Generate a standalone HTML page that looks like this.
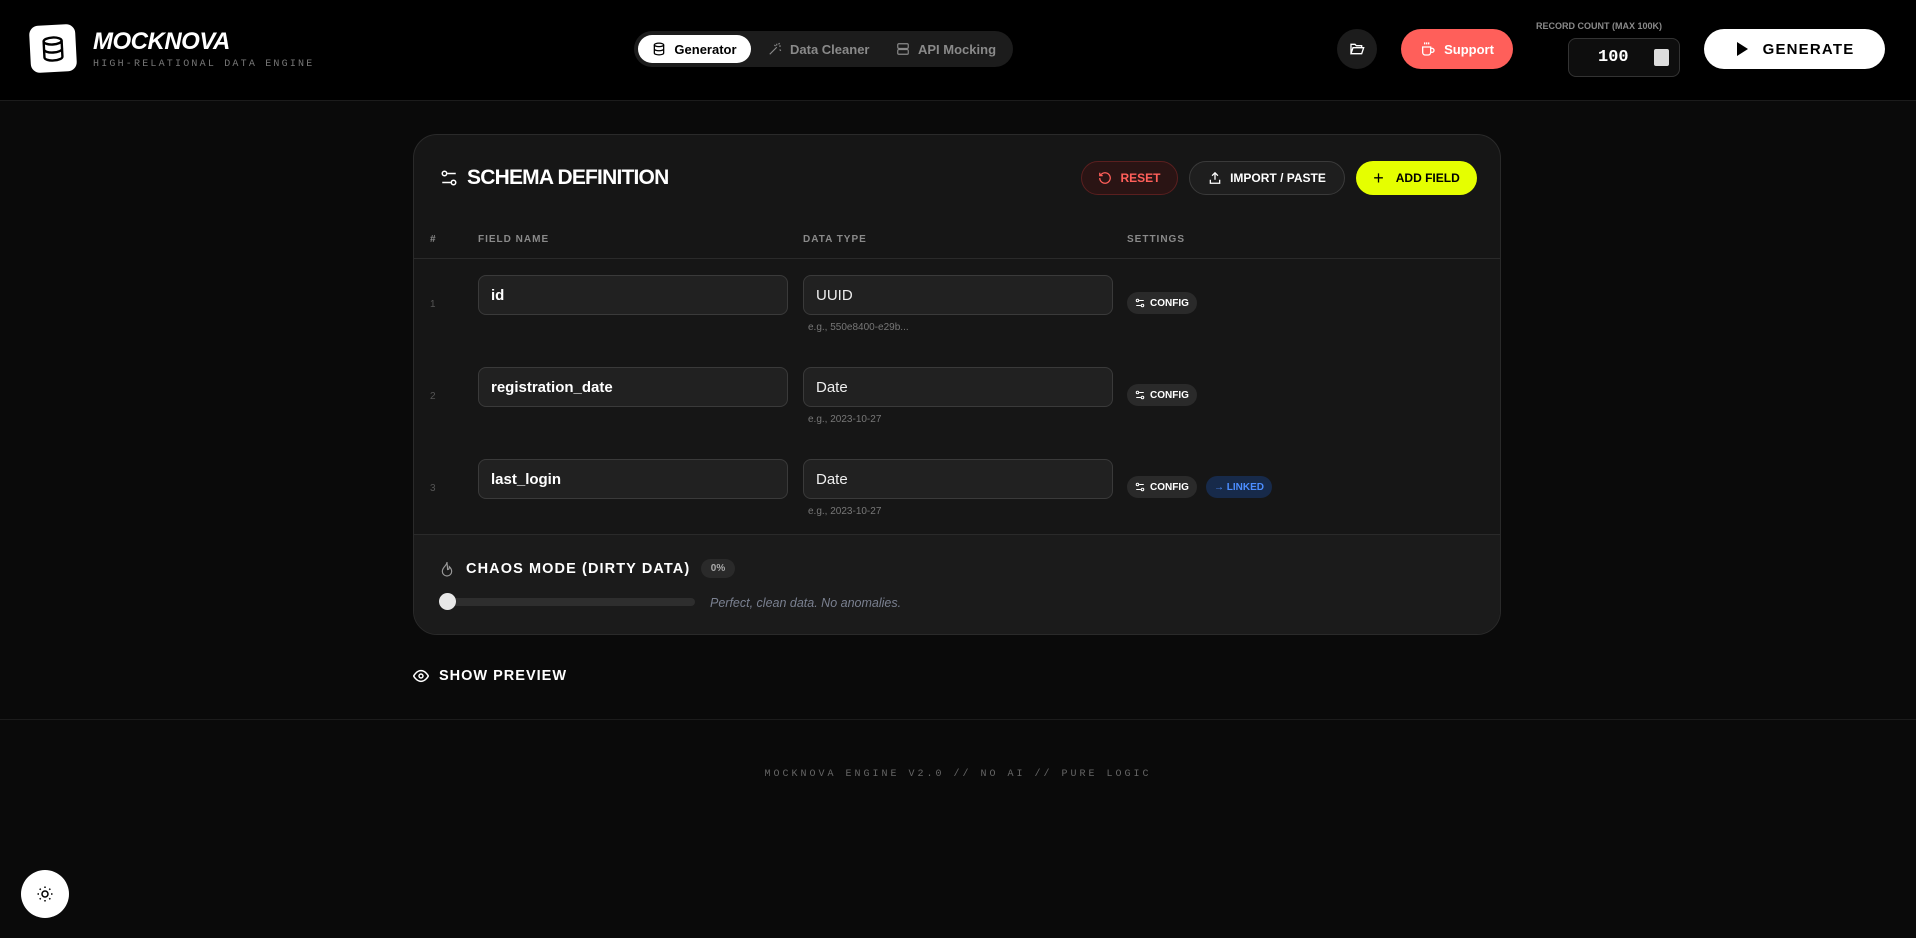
<!DOCTYPE html>
<html><head><meta charset="utf-8"><style>
*{box-sizing:border-box;margin:0;padding:0}
body{width:1916px;height:938px;background:#0a0a0a;font-family:"Liberation Sans",sans-serif;color:#fff;position:relative;overflow:hidden}
.abs{position:absolute}
header{position:absolute;left:0;top:0;width:1916px;height:101px;background:#000;border-bottom:1px solid #1c1c1c}
.logo{left:30px;top:25px;width:46px;height:47px;background:#fff;border-radius:9px;transform:rotate(-3deg);display:flex;align-items:center;justify-content:center}
.brand{left:93px;top:28px;font-size:24px;font-weight:bold;font-style:italic;letter-spacing:-0.5px}
.sub{left:93px;top:59px;font-family:"Liberation Mono",monospace;font-size:10px;letter-spacing:2.2px;color:#777}
.nav{left:634px;top:31px;width:379px;height:36px;background:#1c1c1c;border-radius:18px}
.tab{position:absolute;top:4px;height:28px;border-radius:14px;display:flex;align-items:center;gap:8px;font-size:13px;font-weight:bold;color:#8a8a8a;padding:0 12px}
.tab.on{background:#fff;color:#000}
.btnc{display:flex;align-items:center;justify-content:center;gap:8px;font-weight:bold}
.card{left:413px;top:134px;width:1088px;height:501px;background:#161616;border:1px solid #2a2a2a;border-radius:24px;overflow:hidden}
.pill{position:absolute;height:34px;top:26px;border-radius:17px;font-size:12px}
.th{position:absolute;top:99px;font-size:10px;font-weight:bold;color:#8a8a8a;letter-spacing:1px}
.inp{position:absolute;height:40px;background:#212121;border:1px solid #3a3a3a;border-radius:8px;font-size:15px;font-weight:bold;padding:0 12px;display:flex;align-items:center}
.inp.t{font-weight:normal;color:#eee}
.hint{position:absolute;font-size:10px;color:#777}
.num{position:absolute;font-size:10px;color:#555}
.cfg{position:absolute;height:22px;border-radius:11px;background:#2a2a2a;font-size:10px;font-weight:bold;display:flex;align-items:center;gap:5px;padding:0 8px}
</style></head><body>
<header>
<div class="abs logo"><svg width="24" height="26" viewBox="0 0 24 26" fill="none" stroke="#000" stroke-width="2.4"><ellipse cx="12" cy="5" rx="9" ry="3.5"/><path d="M3 5v16c0 2 4 3.5 9 3.5s9-1.5 9-3.5V5M3 13c0 2 4 3.5 9 3.5s9-1.5 9-3.5"/></svg></div>
<div class="abs brand">MOCKNOVA</div>
<div class="abs sub">HIGH-RELATIONAL DATA ENGINE</div>
<div class="abs nav">
<div class="tab on" style="left:4px;width:113px;justify-content:center"><svg width="14" height="14" viewBox="0 0 24 24" fill="none" stroke="#000" stroke-width="2.2"><ellipse cx="12" cy="5" rx="8" ry="3"/><path d="M4 5v14c0 1.7 3.6 3 8 3s8-1.3 8-3V5M4 12c0 1.7 3.6 3 8 3s8-1.3 8-3"/></svg>Generator</div>
<div class="tab" style="left:122px"><svg width="14" height="14" viewBox="0 0 24 24" fill="none" stroke="#8a8a8a" stroke-width="2"><path d="M3 21L15 9M15 3v3M19 7h3M18 4l2-2M13 7l-2-2M20 13l2 2"/></svg>Data Cleaner</div>
<div class="tab" style="left:250px"><svg width="14" height="14" viewBox="0 0 24 24" fill="none" stroke="#8a8a8a" stroke-width="2"><rect x="3" y="3" width="18" height="8" rx="2"/><rect x="3" y="13" width="18" height="8" rx="2"/></svg>API Mocking</div>
</div>
<div class="abs btnc" style="left:1337px;top:29px;width:40px;height:40px;border-radius:20px;background:#1c1c1c"><svg width="16" height="16" viewBox="0 0 24 24" fill="none" stroke="#fff" stroke-width="2"><path d="M3 19V5h6l2 2h8v3M3 19l3-9h16l-3 9z"/></svg></div>
<div class="abs btnc" style="left:1401px;top:29px;width:112px;height:40px;border-radius:20px;background:#ff5f5a;font-size:13px"><svg width="16" height="16" viewBox="0 0 24 24" fill="none" stroke="#fff" stroke-width="2"><path d="M4 9h12v8a4 4 0 0 1-4 4H8a4 4 0 0 1-4-4zM16 11h2a3 3 0 0 1 0 6h-2M7 2v3M10 2v3M13 2v3"/></svg>Support</div>
<div class="abs" style="left:1536px;top:21px;font-size:9px;font-weight:bold;color:#8a8a8a">RECORD COUNT (MAX 100K)</div>
<div class="abs" style="left:1568px;top:38px;width:112px;height:39px;border:1px solid #333;border-radius:8px;background:#0e0e0e"><div class="abs" style="left:29px;top:9px;font-family:'Liberation Mono',monospace;font-weight:bold;font-size:17px">100</div><div class="abs" style="left:85px;top:10px;width:15px;height:17px;background:#ddd;border-radius:2px"></div></div>
<div class="abs btnc" style="left:1704px;top:29px;width:181px;height:40px;border-radius:20px;background:#fff;color:#000;font-size:15px;letter-spacing:1.2px;gap:14px"><svg width="14" height="16" viewBox="0 0 14 16"><path d="M2 1l11 7-11 7z" fill="#000"/></svg>GENERATE</div>
</header>

<div class="abs card">
<svg class="abs" style="left:26px;top:34px" width="18" height="18" viewBox="0 0 24 24" fill="none" stroke="#fff" stroke-width="2"><path d="M10 6h11M3 18h11"/><circle cx="6" cy="6" r="3"/><circle cx="18" cy="18" r="3"/></svg>
<div class="abs" style="left:53px;top:31px;font-size:21px;font-weight:bold;letter-spacing:-0.8px">SCHEMA DEFINITION</div>
<div class="pill btnc" style="left:667px;width:97px;background:#2a1414;border:1px solid #5a1f1f;color:#ff5f5a"><svg width="14" height="14" viewBox="0 0 24 24" fill="none" stroke="#ff5f5a" stroke-width="2.2"><path d="M3 12a9 9 0 1 0 3-6.7L3 8M3 3v5h5"/></svg>RESET</div>
<div class="pill btnc" style="left:775px;width:156px;background:#1e1e1e;border:1px solid #3a3a3a"><svg width="14" height="14" viewBox="0 0 24 24" fill="none" stroke="#fff" stroke-width="2.2"><path d="M12 15V3M7 8l5-5 5 5M4 15v6h16v-6"/></svg>IMPORT / PASTE</div>
<div class="pill btnc" style="left:942px;width:121px;background:#e5ff00;color:#000"><span style="font-size:18px;font-weight:normal;margin-right:4px">+</span>ADD FIELD</div>
<div class="th" style="left:16px">#</div><div class="th" style="left:64px">FIELD NAME</div><div class="th" style="left:389px">DATA TYPE</div><div class="th" style="left:713px">SETTINGS</div>
<div class="abs" style="left:0;top:123px;width:1088px;height:1px;background:#2a2a2a"></div>

<div class="num" style="left:16px;top:164px">1</div>
<div class="inp" style="left:64px;top:140px;width:310px">id</div>
<div class="inp t" style="left:389px;top:140px;width:310px">UUID</div>
<div class="hint" style="left:394px;top:187px">e.g., 550e8400-e29b...</div>
<div class="cfg" style="left:713px;top:157px"><svg width="10" height="10" viewBox="0 0 24 24" fill="none" stroke="#fff" stroke-width="2.5"><path d="M10 6h11M3 18h11"/><circle cx="6" cy="6" r="3"/><circle cx="18" cy="18" r="3"/></svg>CONFIG</div>

<div class="num" style="left:16px;top:256px">2</div>
<div class="inp" style="left:64px;top:232px;width:310px">registration_date</div>
<div class="inp t" style="left:389px;top:232px;width:310px">Date</div>
<div class="hint" style="left:394px;top:279px">e.g., 2023-10-27</div>
<div class="cfg" style="left:713px;top:249px"><svg width="10" height="10" viewBox="0 0 24 24" fill="none" stroke="#fff" stroke-width="2.5"><path d="M10 6h11M3 18h11"/><circle cx="6" cy="6" r="3"/><circle cx="18" cy="18" r="3"/></svg>CONFIG</div>

<div class="num" style="left:16px;top:348px">3</div>
<div class="inp" style="left:64px;top:324px;width:310px">last_login</div>
<div class="inp t" style="left:389px;top:324px;width:310px">Date</div>
<div class="hint" style="left:394px;top:371px">e.g., 2023-10-27</div>
<div class="cfg" style="left:713px;top:341px"><svg width="10" height="10" viewBox="0 0 24 24" fill="none" stroke="#fff" stroke-width="2.5"><path d="M10 6h11M3 18h11"/><circle cx="6" cy="6" r="3"/><circle cx="18" cy="18" r="3"/></svg>CONFIG</div>
<div class="cfg" style="left:792px;top:341px;background:#172a4a;color:#4c8dff">→ LINKED</div>

<div class="abs" style="left:0;top:399px;width:1088px;height:102px;background:#1b1b1b;border-top:1px solid #2a2a2a"></div>
<svg class="abs" style="left:26px;top:425px" width="14" height="18" viewBox="0 0 24 28" fill="none" stroke="#999" stroke-width="2"><path d="M12 2c0 6-8 9-8 16a8 8 0 0 0 16 0c0-4-2-6-4-8 0 3-1 5-3 5 0-5-1-9-1-13z"/></svg>
<div class="abs" style="left:52px;top:426px;font-size:14.5px;font-weight:bold;letter-spacing:1.1px">CHAOS MODE (DIRTY DATA)</div>
<div class="abs" style="left:287px;top:424px;width:34px;height:19px;border-radius:10px;background:#2a2a2a;font-size:10px;font-weight:bold;color:#aaa;text-align:center;line-height:19px">0%</div>
<div class="abs" style="left:26px;top:463px;width:255px;height:8px;border-radius:4px;background:#2e2e2e"></div>
<div class="abs" style="left:25px;top:458px;width:17px;height:17px;border-radius:50%;background:#e8e8e8"></div>
<div class="abs" style="left:296px;top:461px;font-size:12.5px;font-style:italic;color:#7a8090">Perfect, clean data. No anomalies.</div>
</div>

<svg class="abs" style="left:413px;top:669px" width="16" height="14" viewBox="0 0 24 20" fill="none" stroke="#fff" stroke-width="2.2"><path d="M1 10s4-8 11-8 11 8 11 8-4 8-11 8S1 10 1 10z"/><circle cx="12" cy="10" r="3"/></svg>
<div class="abs" style="left:439px;top:668px;font-size:14.5px;font-weight:bold;letter-spacing:1px">SHOW PREVIEW</div>
<div class="abs" style="left:0;top:719px;width:1916px;height:1px;background:#1c1c1c"></div>
<div class="abs" style="left:0;top:769px;width:1916px;text-align:center;font-family:'Liberation Mono',monospace;font-size:10px;letter-spacing:3px;color:#666">MOCKNOVA ENGINE V2.0 // NO AI // PURE LOGIC</div>
<div class="abs btnc" style="left:21px;top:870px;width:48px;height:48px;border-radius:50%;background:#fff"><svg width="18" height="18" viewBox="0 0 24 24" fill="none" stroke="#000" stroke-width="2"><circle cx="12" cy="12" r="4"/><path d="M12 2v2M12 20v2M2 12h2M20 12h2M4.9 4.9l1.4 1.4M17.7 17.7l1.4 1.4M4.9 19.1l1.4-1.4M17.7 6.3l1.4-1.4"/></svg></div>
</body></html>
